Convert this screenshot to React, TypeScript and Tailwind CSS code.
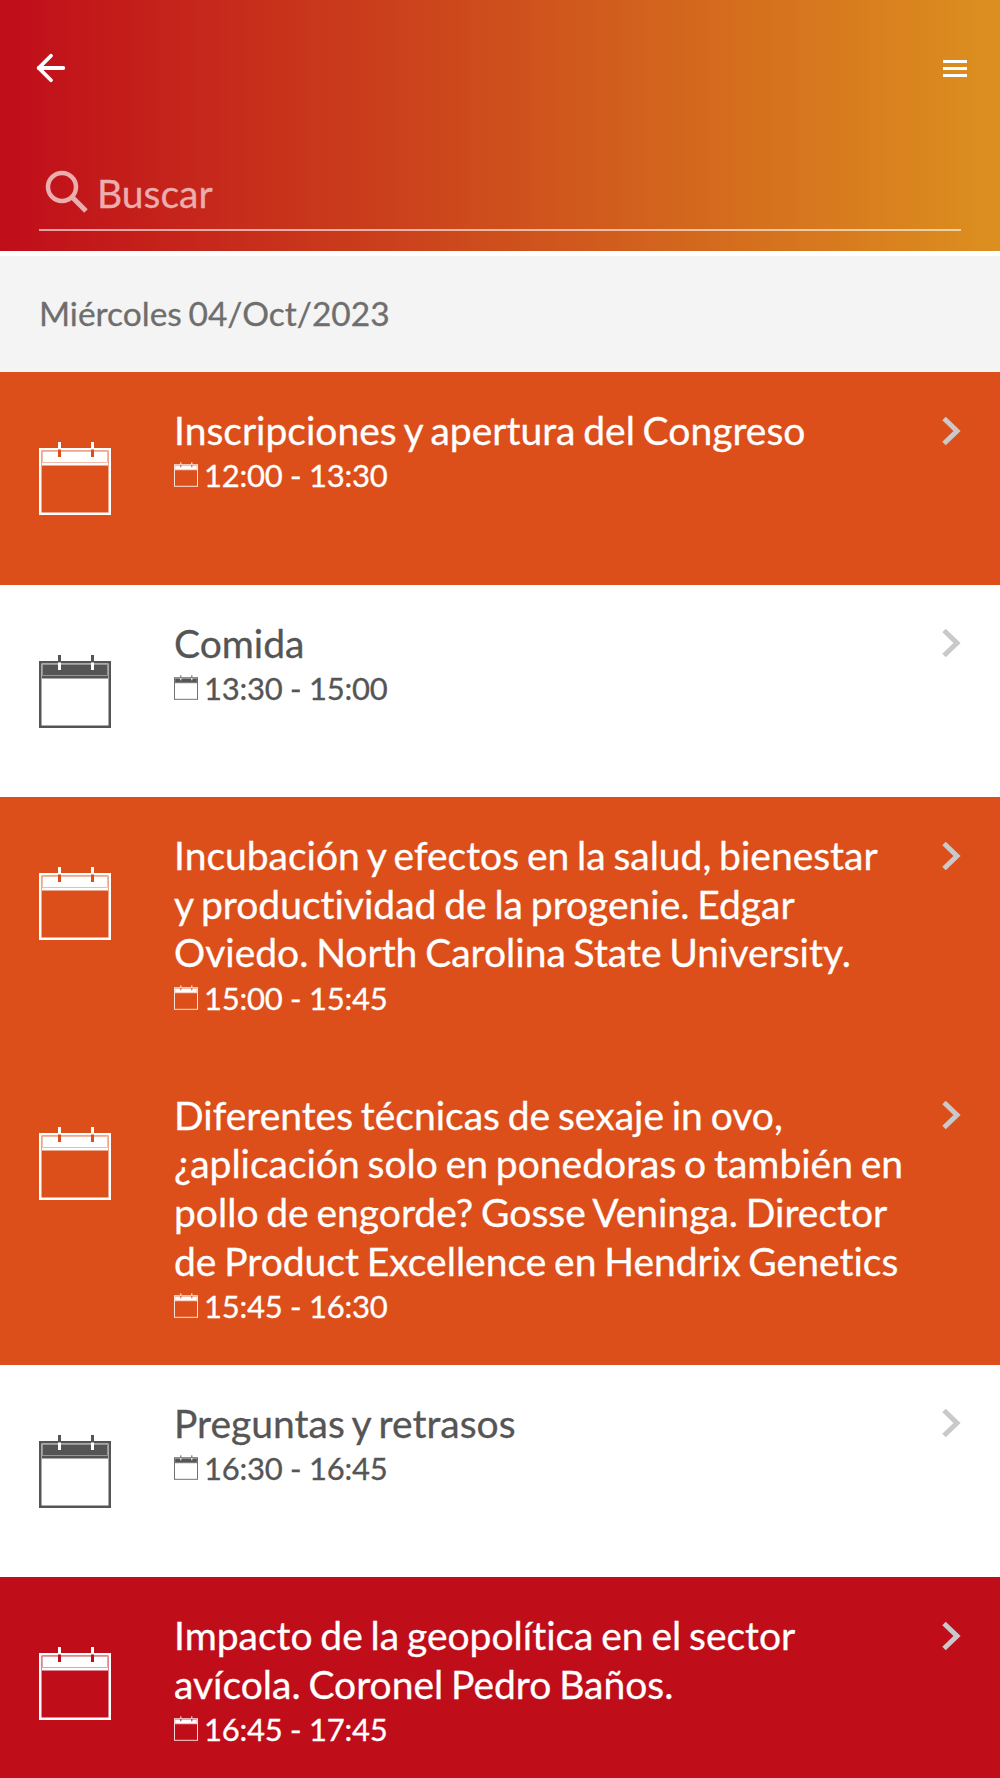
import { ArrowLeft } from "lucide-react";

type Tone = "orange" | "white" | "red";

interface Session {
  title: string[];
  time: string;
  tone: Tone;
}

const sessions: Session[] = [
  { title: ["Inscripciones y apertura del Congreso"], time: "12:00 - 13:30", tone: "orange" },
  { title: ["Comida"], time: "13:30 - 15:00", tone: "white" },
  {
    title: [
      "Incubación y efectos en la salud, bienestar",
      "y productividad de la progenie. Edgar",
      "Oviedo. North Carolina State University.",
    ],
    time: "15:00 - 15:45",
    tone: "orange",
  },
  {
    title: [
      "Diferentes técnicas de sexaje in ovo,",
      "¿aplicación solo en ponedoras o también en",
      "pollo de engorde? Gosse Veninga. Director",
      "de Product Excellence en Hendrix Genetics",
    ],
    time: "15:45 - 16:30",
    tone: "orange",
  },
  { title: ["Preguntas y retrasos"], time: "16:30 - 16:45", tone: "white" },
  {
    title: ["Impacto de la geopolítica en el sector", "avícola. Coronel Pedro Baños."],
    time: "16:45 - 17:45",
    tone: "red",
  },
];

function CalendarIcon({ fg, bg, className }: { fg: string; bg: string; className: string }) {
  return (
    <svg viewBox="0 0 72 73" className={className}>
      <rect x="1.25" y="7.25" width="69.5" height="64.5" fill="none" stroke={fg} strokeWidth="2.5" />
      <rect x="3" y="9" width="66" height="12" fill={fg} />
      <rect x="3.5" y="9.5" width="65" height="11" fill="none" stroke={bg} strokeWidth="0.7" opacity="0.55" />
      <rect x="3" y="21" width="66" height="2.5" fill={fg} />
      <rect x="19" y="0" width="3" height="7.5" fill={fg} />
      <rect x="52" y="0" width="3" height="7.5" fill={fg} />
      <rect x="19" y="7.5" width="3" height="7.5" fill={bg} />
      <rect x="52" y="7.5" width="3" height="7.5" fill={bg} />
    </svg>
  );
}

function SessionRow({ session }: { session: Session }) {
  const light = session.tone === "white";
  const fg = light ? "#555555" : "#ffffff";
  const bg = session.tone === "white" ? "#ffffff" : session.tone === "red" ? "#c00d1a" : "#dc4f1b";
  const toneClass =
    session.tone === "white"
      ? "bg-white text-[#555555]"
      : session.tone === "red"
        ? "bg-[#c00d1a] text-white"
        : "bg-[#dc4f1b] text-white";

  return (
    <div className={`flex pt-[34px] pb-[38.5px] pl-[39px] pr-[39px] ${toneClass} ${session.title.length === 1 ? "min-h-[212.5px]" : ""}`}>
      <div className="w-[135px] shrink-0 pt-[36px]">
        <CalendarIcon fg={fg} bg={bg} className="w-[72px] h-[73px]" />
      </div>
      <div className="flex-1 min-w-0">
        <div className="text-[39px] leading-[48.7px] whitespace-nowrap [font-variant-ligatures:none] [word-spacing:-2.2px] [-webkit-text-stroke:0.3px_currentColor]">
          {session.title.map((line) => (
            <div key={line}>{line}</div>
          ))}
        </div>
        <div className="flex items-center h-[41px] text-[31px] leading-[40px] tracking-[-0.25px] [-webkit-text-stroke:0.3px_currentColor]">
          <CalendarIcon fg={fg} bg={bg} className="w-[24px] h-[25px] mr-[6px] mb-[1px]" />
          {session.time}
        </div>
      </div>
      <svg viewBox="0 0 20 30" className="w-[20px] h-[30px] mt-[9.5px] shrink-0">
        <path d="M3 2.5 L16 15 L3 27.5" fill="none" stroke="#c9c9cb" strokeWidth="5" />
      </svg>
    </div>
  );
}

export default function App() {
  return (
    <div className="w-[1000px] h-[1778px] overflow-hidden bg-white font-['Lato',sans-serif]">
      <header className="h-[251px] bg-[linear-gradient(to_right,#c00d1a,#dc901f)] px-[39px] flex flex-col">
        <div className="flex items-center justify-between h-[136px]">
          <ArrowLeft size={42} strokeWidth={2.2} className="text-white -ml-[9px]" />
          <div className="flex flex-col gap-[4px] w-[24px] -mr-[6px]">
            <span className="h-[3px] bg-white" />
            <span className="h-[3px] bg-white" />
            <span className="h-[3px] bg-white" />
          </div>
        </div>
        <div className="flex items-center h-[95px] border-b-2 border-white/60 pl-[6px] pt-[18px]">
          <svg viewBox="0 0 44 44" className="w-[44px] h-[44px] mr-[8px]">
            <circle cx="17" cy="17" r="14" fill="none" stroke="#ebadad" strokeWidth="4.5" />
            <path d="M27 27 L41 41" fill="none" stroke="#ebadad" strokeWidth="5" />
          </svg>
          <span className="pt-[4px] text-[39px] text-[#ebadad] [-webkit-text-stroke:0.3px_currentColor]">Buscar</span>
        </div>
      </header>
      <div className="mt-[5px] h-[116px] pb-[2px] bg-[#f4f4f4] flex items-center px-[39px] text-[33.5px] text-[#6e6e6e] [word-spacing:-2px] [-webkit-text-stroke:0.3px_currentColor]">
        Miércoles 04/Oct/2023
      </div>
      {sessions.map((s) => (
        <SessionRow key={s.time} session={s} />
      ))}
    </div>
  );
}
